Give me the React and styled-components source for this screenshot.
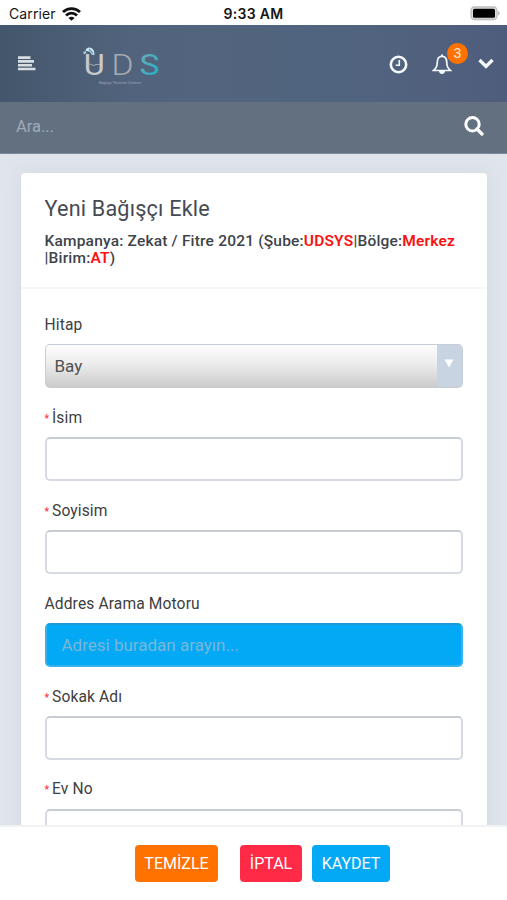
import React from 'react';
import styled, { createGlobalStyle } from 'styled-components';

const GlobalStyle = createGlobalStyle`
  * {
    box-sizing: border-box;
  }
  body {
    margin: 0;
    font-family: Roboto, 'Liberation Sans', sans-serif;
    color: #404040;
  }
`;

const Screen = styled.div`
  width: 507px;
  height: 900px;
  display: flex;
  flex-direction: column;
  overflow: hidden;
  background: #e0e5ec;
`;

const StatusBar = styled.div`
  flex: none;
  height: 25px;
  padding: 2px 7px 0 9px;
  display: grid;
  grid-template-columns: 1fr auto 1fr;
  align-items: center;
  background: #fff;
  color: #151515;
  font-family: Inter, 'Liberation Sans', sans-serif;
  font-size: 14px;
`;

const Carrier = styled.div`
  display: flex;
  align-items: center;
  gap: 6px;
  letter-spacing: 0.1px;
`;

const Time = styled.div`
  font-weight: 600;
  font-size: 14px;
  letter-spacing: 0.3px;
  margin-right: 2px;
`;

const BatterySlot = styled.div`
  display: flex;
  justify-content: flex-end;
`;

const TopBar = styled.header`
  flex: none;
  height: 77px;
  padding: 0 13px 0 18px;
  display: flex;
  align-items: center;
  background: linear-gradient(90deg, #43566b 0, #52647d 130px, #51647f 350px, #4f5d7c 100%);
`;

const Logo = styled.div`
  width: 78px;
  margin-left: 46px;
  display: flex;
`;

const TopActions = styled.div`
  margin-left: auto;
  display: flex;
  align-items: center;
`;

const IconButton = styled.button`
  width: ${props => props.width || 24}px;
  height: 32px;
  margin-left: ${props => props.gap || 0}px;
  padding: 0;
  border: 0;
  display: flex;
  align-items: center;
  justify-content: center;
  position: relative;
  background: none;
  color: #f4f8fb;
`;

const Badge = styled.span`
  position: absolute;
  top: -5px;
  right: -14px;
  width: 21px;
  height: 21px;
  border-radius: 50%;
  background: #ff7200;
  color: #ffe9d6;
  font-size: 14px;
  line-height: 21px;
  text-align: center;
`;

const SearchBar = styled.div`
  flex: none;
  height: 52px;
  padding: 0 19px 3px 16px;
  display: flex;
  align-items: center;
  justify-content: space-between;
  background: #63707f;
  border-bottom: 1px solid #7d8897;
`;

const SearchInput = styled.input`
  width: 300px;
  padding: 0;
  border: 0;
  outline: 0;
  background: none;
  font: 16.5px Roboto, sans-serif;
  &::placeholder {
    color: #9eabba;
    opacity: 1;
  }
`;

const Content = styled.main`
  flex: 1;
  min-height: 0;
  overflow: hidden;
  padding: 19px 20px 0 20.5px;
`;

const Card = styled.section`
  background: #fff;
  border-radius: 4px 4px 0 0;
  box-shadow: 0 0 18px 1px rgba(150, 170, 180, 0.18);
`;

const CardHeader = styled.div`
  height: 116px;
  padding: 22px 24px 0;
  border-bottom: 2px solid #f6f7f7;
`;

const Title = styled.h1`
  margin: 0;
  font-size: 21.6px;
  line-height: 28px;
  font-weight: 400;
  letter-spacing: 0.2px;
  color: #464a53;
`;

const Campaign = styled.div`
  margin-top: 10px;
  font-size: 15.5px;
  line-height: 17px;
  font-weight: 500;
  letter-spacing: 0.19px;
  white-space: nowrap;
  color: #40444a;
`;

const Highlight = styled.span`
  font-weight: 600;
  color: #fb1212;
`;

const Form = styled.form`
  padding: 26px 24px 0;
`;

const Field = styled.div`
  height: 92.9px;
`;

const Label = styled.label`
  height: 29.4px;
  display: flex;
  align-items: flex-start;
  font-size: 15.6px;
  line-height: 21px;
  letter-spacing: 0.12px;
`;

const Required = styled.span`
  width: 7.5px;
  font-size: 10px;
  font-weight: 700;
  color: #f8384d;
`;

const TextInput = styled.input`
  display: block;
  width: 100%;
  height: 44px;
  padding: 0 15px;
  outline: 0;
  border: 2px solid ${props => (props.$filled ? '#38b2ec' : '#d6dae2')};
  border-top-color: ${props => (props.$filled ? '#1b9ad6' : '#c8ccd3')};
  border-radius: 5px;
  background: ${props => (props.$filled ? '#04a9f5' : '#fff')};
  font: 17px Roboto, sans-serif;
  &::placeholder {
    color: #79b7d6;
    opacity: 1;
  }
`;

const SelectBox = styled.div`
  height: 44px;
  display: flex;
  border: 1.5px solid #c6cdd8;
  border-bottom-color: #c7cad0;
  border-radius: 5px;
  overflow: hidden;
  background: linear-gradient(#fdfdfd 0, #ececec 45%, #cbcbcb 100%);
`;

const SelectValue = styled.div`
  flex: 1;
  padding-left: 9px;
  font-size: 17px;
  line-height: 42px;
  color: #505050;
`;

const SelectArrow = styled.div`
  width: 25px;
  padding-left: 7px;
  display: flex;
  align-items: flex-start;
  background: #c8d4e2;

  svg {
    margin-top: 14px;
  }
`;

const Footer = styled.footer`
  flex: none;
  height: 75px;
  padding: 18px 0 0 135px;
  display: flex;
  align-items: flex-start;
  background: #fff;
  border-top: 2px solid #f1f2f3;
`;

const Button = styled.button`
  width: ${props => props.$width}px;
  height: 37px;
  margin-right: ${props => props.$gap || 0}px;
  padding: 0 0 1px;
  border: 0;
  border-radius: 4px;
  background: ${props => props.$color};
  color: #fff;
  font: 16px Roboto, sans-serif;
  white-space: nowrap;
`;

const WifiIcon = () => (
  <svg width="19" height="14" viewBox="0 0 19 14" fill="none" stroke="#111" strokeWidth="2.8">
    <path d="M1 5C5.7.4 13.3.4 18 5M4 8.4c3.1-3 7.9-3 11 0" />
    <path d="M6.5 10.9c1.7-1.6 4.3-1.6 6 0l-3 2.9z" fill="#111" stroke="none" />
  </svg>
);

const BatteryIcon = () => (
  <svg width="31" height="15" viewBox="0 0 31 15">
    <rect x="2" y="1" width="26" height="12.5" rx="3.5" fill="#ddd" stroke="#bdbdbd" strokeWidth="1.3" />
    <rect x="4" y="2.7" width="22" height="9" rx="1.5" fill="#000" />
    <path d="M29.2 5c1.8.8 1.8 3.8 0 4.6z" fill="#aaa" />
  </svg>
);

const MenuIcon = () => (
  <svg width="18" height="15" viewBox="0 0 18 15" stroke="#d9dee2" strokeWidth="2.6">
    <path d="M0 1.6h12.5M0 5.4h16M0 9.2h14M0 13h17.5" />
  </svg>
);

const LogoMark = () => (
  <svg width="78" height="42" viewBox="0 0 78 42" fontFamily="Roboto">
    <defs>
      <linearGradient id="teal" x1="0" y1="0" x2="1" y2="1">
        <stop offset="0" stopColor="#79a8b7" />
        <stop offset="1" stopColor="#12b2c4" />
      </linearGradient>
    </defs>
    <text x="1.8" y="32" fontSize="29" fontWeight="400" textLength="21" lengthAdjust="spacingAndGlyphs" fill="#c9c9cb">U</text>
    <text x="29.5" y="32" fontSize="29" fontWeight="300" textLength="22" lengthAdjust="spacingAndGlyphs" fill="#a5aab3">D</text>
    <text x="57.5" y="32" fontSize="29" fontWeight="400" textLength="20" lengthAdjust="spacingAndGlyphs" fill="url(#teal)">S</text>
    <path d="M6 22c3-2.5 4 1.5 7 0 1.5-1 3-.5 5-.5" fill="none" stroke="#a7b4c0" />
    <path d="M3.500 7C5 3.500 10 3.500 12 8l.5 4-3-.5C9 9 7 8 4 8z" fill="#d1e7f1" />
    <path d="M1 9l2.500-1 1 2-2.500 1.500z" fill="#9ccbe2" />
    <path d="M7 6l4 4.500" stroke="#639bb9" strokeWidth="1.2" />
    <text x="17" y="40.5" fontSize="4" textLength="42" fill="#98a3b2">Bağışçı Yönetim Sistemi</text>
  </svg>
);

const ClockIcon = () => (
  <svg width="19" height="21" viewBox="0 0 19 21" fill="none" stroke="currentColor">
    <circle cx="9.5" cy="11.5" r="7.7" strokeWidth="2.6" />
    <path d="M10.3 7v5.2H6.700" strokeWidth="1.6" />
  </svg>
);

const BellIcon = () => (
  <svg width="20" height="23" viewBox="0 0 20 23" fill="none" stroke="currentColor" strokeWidth="1.7">
    <path d="M10 4.3c-3.5 0-4.7 2.7-4.7 6 0 4-1.2 6.2-3.7 8.2h16.8c-2.5-2-3.7-4.2-3.7-8.2 0-3.3-1.2-6-4.7-6z" />
    <path d="M10 2.5v2" strokeWidth="2" />
    <path d="M7 19h6c0 4-6 4-6 0z" fill="currentColor" stroke="none" />
  </svg>
);

const ChevronIcon = () => (
  <svg width="16" height="11" viewBox="0 0 16 11" fill="none" stroke="currentColor" strokeWidth="3.4">
    <path d="M1.5 2L8 8.4 14.5 2" />
  </svg>
);

const SearchIcon = () => (
  <svg width="20" height="20" viewBox="0 0 20 20" fill="none" stroke="#fff">
    <circle cx="8.5" cy="8.3" r="6.7" strokeWidth="3" />
    <path d="M13 13l5 5" strokeWidth="3.2" strokeLinecap="round" />
  </svg>
);

const FormField = ({ label, required, children }) => (
  <Field>
    <Label>
      {required && <Required>*</Required>}
      {label}
    </Label>
    {children || <TextInput />}
  </Field>
);

export default function App() {
  return (
    <Screen>
      <GlobalStyle />
      <StatusBar>
        <Carrier>
          Carrier
          <WifiIcon />
        </Carrier>
        <Time>9:33 AM</Time>
        <BatterySlot>
          <BatteryIcon />
        </BatterySlot>
      </StatusBar>
      <TopBar>
        <MenuIcon />
        <Logo>
          <LogoMark />
        </Logo>
        <TopActions>
          <IconButton>
            <ClockIcon />
          </IconButton>
          <IconButton gap={20}>
            <BellIcon />
            <Badge>3</Badge>
          </IconButton>
          <IconButton width={16} gap={24}>
            <ChevronIcon />
          </IconButton>
        </TopActions>
      </TopBar>
      <SearchBar>
        <SearchInput placeholder="Ara..." />
        <IconButton width={29}>
          <SearchIcon />
        </IconButton>
      </SearchBar>
      <Content>
        <Card>
          <CardHeader>
            <Title>Yeni Bağışçı Ekle</Title>
            <Campaign>
              Kampanya: Zekat / Fitre 2021 (Şube:<Highlight>UDSYS</Highlight>|Bölge:
              <Highlight>Merkez</Highlight>
              <br />
              |Birim:<Highlight>AT</Highlight>)
            </Campaign>
          </CardHeader>
          <Form>
            <FormField label="Hitap">
              <SelectBox>
                <SelectValue>Bay</SelectValue>
                <SelectArrow>
                  <svg width="10" height="9" viewBox="0 0 10 9">
                    <path d="M.5.5h9L5 8.5z" fill="#fff" />
                  </svg>
                </SelectArrow>
              </SelectBox>
            </FormField>
            <FormField label="İsim" required />
            <FormField label="Soyisim" required />
            <FormField label="Addres Arama Motoru">
              <TextInput $filled placeholder="Adresi buradan arayın..." />
            </FormField>
            <FormField label="Sokak Adı" required />
            <FormField label="Ev No" required />
          </Form>
        </Card>
      </Content>
      <Footer>
        <Button $width={83} $gap={22} $color="#ff7200">TEMİZLE</Button>
        <Button $width={62} $gap={10} $color="#ff2b46">İPTAL</Button>
        <Button $width={78} $color="#04a9f5">KAYDET</Button>
      </Footer>
    </Screen>
  );
}
